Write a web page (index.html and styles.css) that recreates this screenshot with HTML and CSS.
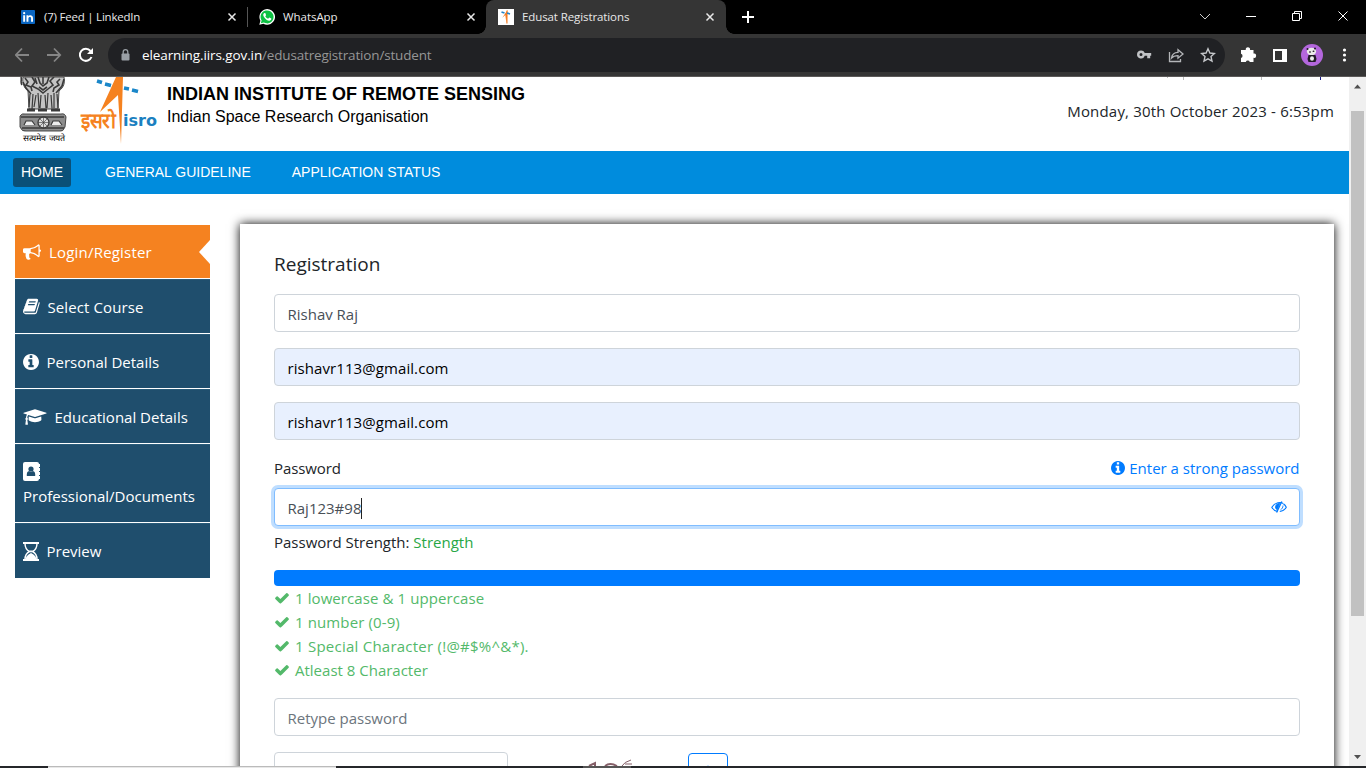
FILE: index.html
```html
<!DOCTYPE html>
<html lang="en">
<head>
<meta charset="utf-8">
<title>Edusat Registrations</title>
<link rel="stylesheet" href="styles.css">
</head>
<body>
<svg class="defs" width="0" height="0">
  <symbol id="x" viewBox="0 0 10 10"><path d="M1.500 1.500l7 7M8.500 1.500l-7 7" fill="none" stroke="currentColor" stroke-width="1.500"/></symbol>
  <symbol id="check" viewBox="0 0 1792 1792"><path fill="currentColor" d="M1671 566q0 40-28 68l-724 724-136 136q-28 28-68 28t-68-28l-136-136-362-362q-28-28-28-68t28-68l136-136q28-28 68-28t68 28l294 295 656-657q28-28 68-28t68 28l136 136q28 28 28 68z"/></symbol>
  <symbol id="info" viewBox="128 128 1536 1536"><path fill="currentColor" d="M1152 1376v-160q0-14-9-23t-23-9h-96v-512q0-14-9-23t-23-9h-320q-14 0-23 9t-9 23v160q0 14 9 23t23 9h96v320h-96q-14 0-23 9t-9 23v160q0 14 9 23t23 9h448q14 0 23-9t9-23zm-128-896v-192q0-14-9-23t-23-9h-192q-14 0-23 9t-9 23v192q0 14 9 23t23 9h192q14 0 23-9t9-23zm640 416q0 209-103 385.500t-279.500 279.500-385.500 103-385.500-103-279.500-279.500-103-385.500 103-385.500 279.500-279.500 385.500-103 385.500 103 279.500 279.500 103 385.500z"/></symbol>
</svg>
<div class="window">
  <div class="tabs">
    <div class="tab t1">
      <svg class="fav" viewBox="0 0 14 14" width="14" height="14"><rect width="14" height="14" rx="1" fill="#0a66c2"/><path d="M2.2 5.3h1.9v6.4H2.2zM5.5 5.3h1.8v.9c.9-1.5 4.7-1.6 4.7 1.7v3.8h-1.9V8.4c0-2.100-2.700-1.900-2.700 0v3.300H5.500z" fill="#fff"/><circle cx="3.150" cy="3.200" r="1.100" fill="#fff"/></svg>
      <span class="name n1">(7) Feed | LinkedIn</span><svg class="x" width="10" height="10"><use href="#x"/></svg>
    </div>
    <div class="tab t2">
      <svg class="fav" viewBox="0 0 16 16" width="16" height="16"><path d="M.3 15.800l1.100-4.100A7.800 7.800 0 1 1 4.400 14.700z" fill="#fff"/><path d="M1.800 14.300l.8-2.900A6.500 6.500 0 1 1 4.800 13.500z" fill="#0dc143"/><path d="M5.400 3.900c-1.500.8-1.500 2.400-.4 4.100 1.500 2.300 3.400 3.700 5.300 3.700 1.100 0 2.100-.8 2-2.100l-2-1.100-1.200 1.200C7.800 9.300 6.800 8.300 6.300 7.200l.8-1-.8-2.200z" fill="#fff"/></svg>
      <span class="name n2">WhatsApp</span><svg class="x" width="10" height="10"><use href="#x"/></svg>
    </div>
    <div class="tab t3">
      <svg class="fav" viewBox="0 0 16 16" width="16" height="16"><path d="M0 0h16v16H0z" fill="#fff"/><path d="M9.500 1L8.500 15 7.300 6 4.300 8.800z" fill="#f47b20"/><path d="M9 1.500v13" stroke="#f47b20"/><path d="M3.500 3l3 1M9 4l3 1" stroke="#2484c6" stroke-width="1.700"/></svg>
      <span class="name n3">Edusat Registrations</span><svg class="x" width="10" height="10"><use href="#x"/></svg>
    </div>
    <svg class="plus" width="12" height="12" viewBox="0 0 12 12"><path d="M6 0v12M0 6h12" stroke="#fff" stroke-width="2"/></svg>
    <svg class="winctl" width="160" height="30" viewBox="0 0 160 30" fill="none" stroke="#fff"><path d="M10 12l5 5 5-5" stroke="#ccc"/><path d="M56 14.500h10"/><path d="M102.500 11.500h7v7h-7zM104.500 11.500v-2h7v7h-2"/><path d="M148.500 9.500l9 9M157.500 9.500l-9 9"/></svg>
  </div>
  <div class="toolbar">
    <svg class="navbtns" width="80" height="20" viewBox="0 0 80 20" fill="none" stroke="#858585" stroke-width="1.800"><path d="M14 10H1M7 3.500L.8 10 7 16.500M32 10h13M39 3.500l6.200 6.500-6.200 6.500"/><path d="M75.500 6A6 6 0 1 0 76.500 12" stroke="#fff" stroke-width="2"/><path d="M78 3v6h-6z" fill="#fff" stroke="none"/></svg>
    <div class="address">
      <svg class="lock" width="9" height="12" viewBox="0 0 9 12"><rect x=".500" y="4.500" width="8" height="7" rx="1" fill="#9aa0a6"/><path d="M2.200 5V3a2.300 2.300 0 0 1 4.600 0v2" fill="none" stroke="#9aa0a6" stroke-width="1.300"/></svg>
      <span class="url"><b>elearning.iirs.gov.in</b>/edusatregistration/student</span>
      <svg class="acts" width="80" height="18" viewBox="0 0 80 18"><path d="M5 4.500a4 4 0 1 0 3.800 5.300h2.400v2.500h3V9.800h1V6.900H8.800A4 4 0 0 0 5 4.500zm0 2.600a1.500 1.500 0 1 1 0 3 1.500 1.500 0 0 1 0-3z" fill="#c0c2c5"/><path d="M33.500 6v9.500h11v-2.500M35.500 12c.5-3.500 3-5.500 6.500-5.600V3.700L47 8l-5 4.200V9.600c-3 0-5 .7-6.500 2.400z" fill="none" stroke="#b4b6b9" stroke-width="1.300"/><path d="M72 2.800l1.900 4.200 4.500.5-3.400 3.100 1 4.500-4-2.300-4 2.300 1-4.500-3.400-3.100 4.500-.5z" fill="none" stroke="#c5c7ca" stroke-width="1.400"/></svg>
    </div>
    <svg class="exts" width="126" height="24" viewBox="0 0 126 24"><path d="M2.500 7h3.300a2.200 2.200 0 1 1 4.200 0h3.500v3.500a2.200 2.200 0 1 1 0 4.300V19H9.800a2.100 2.100 0 0 0-4 0H1v-4a2.200 2.200 0 0 0 0-4.200V7z" fill="#fff"/><path d="M34 7h12v11H34z" fill="none" stroke="#fff" stroke-width="2"/><path d="M42 6h5v13h-5z" fill="#fff"/><circle cx="72" cy="12" r="11" fill="#b467dd"/><ellipse cx="71.500" cy="8.500" rx="4.600" ry="3.800" fill="#ecebea"/><g fill="#221c27"><circle cx="67.500" cy="6" r="1"/><circle cx="75" cy="5.500" r="1"/><ellipse cx="70" cy="9" rx="1" ry=".700"/><ellipse cx="73.500" cy="8.300" rx="1" ry=".700"/><path d="M68.500 12h7l1 4-1 3h-7l-1-3z"/></g><ellipse cx="72" cy="15.500" rx="2" ry="2.300" fill="#eee"/><g fill="#fff"><circle cx="104.500" cy="7" r="1.600"/><circle cx="104.500" cy="12" r="1.600"/><circle cx="104.500" cy="17" r="1.600"/></g></svg>
  </div>
  <div class="viewport">
    <main class="page">
      <header class="header">
        <svg class="emblem" width="50" height="68" viewBox="0 0 50 68">
          <g stroke="#3a3a3a" stroke-width=".900">
            <path d="M5 0c-1 6 1 11 5 14l1 18h29l1-18c5-4 6-8 5-14z" fill="#c4c4c4"/>
            <path d="M3 0c1 3-1 5 1 8M7 1l3 4-2 3 5 2 1 4M5 5l3 6 5 6M14 0l3 5-3 4 6 3 5 4 5-4 5-4-3-4 4-4M17 1l2 6M20 0l2 6 3 3 4-3 2-6M25 0v7M21 10l4 3 4-3M42 2l-3 3 2 3-5 3-1 4M46 2l-2 7-6 7" fill="none" stroke-width="1.600"/>
            <path d="M12 17l-1 13M15 17l-1 15M18 18l-2 12M20 16l1 15M23 18l-1 13M27 18l1 13M30 16l-1 15M33 18l1 13M36 16v15M39 17l1 14" fill="none" stroke-width="1.200"/>
            <path d="M9 33h8M20 33h9M33 33h9" stroke-width="3"/>
            <path d="M2 39q2-3 5-2h36q4-1 5 3l-1 10q-2 5-5 4H8q-4 1-6-4z" fill="#8d8d8d"/>
            <path d="M3 40h43M4 51h42" stroke-width="1.600"/>
            <circle cx="25.500" cy="45.500" r="5.500" fill="#ddd" stroke-width="1.300"/><path d="M20 45.500h11M25.500 40v11M21.500 41.500l8 8M29.500 41.500l-8 8" stroke-width=".600"/>
            <path d="M6 48l2-4h6l3 4M33 48l2-4h6l3 4" fill="#eee" stroke-width="1.200"/>
          </g>
          <text x="4.500" y="64" font-size="8.500" textLength="43" lengthAdjust="spacingAndGlyphs">सत्यमेव जयते</text>
        </svg>
        <svg class="isro" width="80" height="68" viewBox="0 0 80 68">
          <path d="M36 0h7l-2 67-3-49-18 17z" fill="#f58220"/>
          <path d="M17 4l5 1.500M25 7l6 1.500M44 11l5 1M52 13l6 1.500" stroke="#1b87c9" stroke-width="3.600"/>
          <text x="1" y="51" font-size="21" font-weight="700" fill="#f58220" textLength="34" lengthAdjust="spacingAndGlyphs">इसरो</text>
          <text x="43" y="49" class="isrotext" fill="#1b80c0" textLength="34" lengthAdjust="spacingAndGlyphs">isro</text>
        </svg>
        <div class="org"><div class="orgname">INDIAN INSTITUTE OF REMOTE SENSING</div><div class="orgsub">Indian Space Research Organisation</div></div>
        <div class="right"><svg class="sliver" width="167" height="3"><path d="M0 0h1v1H0zM16 0h1v3h-1zM94 0h1v3h-1z" fill="#bbb"/><path d="M153 0h1v3h-1z" fill="#1a1a8a"/></svg><span class="date">Monday, 30th October 2023 - 6:53pm</span></div>
      </header>
      <nav class="nav"><a class="on">HOME</a><a class="g">GENERAL GUIDELINE</a><a class="a">APPLICATION STATUS</a></nav>
      <div class="content">
        <aside class="side">
          <div class="item active"><svg width="18" height="18" viewBox="0 0 1792 1792"><path fill="#fff" d="M1664 640q53 0 90.500 37.500t37.500 90.500-37.500 90.500-90.500 37.500v384q0 52-38 90t-90 38q-417-347-812-380-58 19-91 66t-31 100.500 40 92.500q-20 33-23 65.500t6 58 33.500 55 48 50 61.500 50.500q-29 58-111.500 83t-168.500 11.500-132-55.500q-7-23-29.500-87.500t-32-94.500-23-89-15-101 3.500-98.500 22-110.500h-122q-66 0-113-47t-47-113v-192q0-66 47-113t113-47h480q435 0 896-384 52 0 90 38t38 90v384zm-128 604v-954q-394 302-768 343v270q377 42 768 341z"/></svg><span class="s1">Login/Register</span></div>
          <div class="item"><svg width="17" height="17" viewBox="60 90 1700 1620"><path fill="#fff" d="M1703 478q40 57 18 129l-275 906q-19 64-76.500 107.500t-122.500 43.500h-923q-77 0-148.500-53.500t-99.500-131.500q-24-67-2-127 0-4 3-27t4-37q1-8-3-21.500t-3-19.500q2-11 8-21t16.500-23.500 16.500-23.500q23-38 45-91.500t30-91.500q3-10 .5-30t-.5-28q3-11 17-28t17-23q21-36 42-92t25-90q1-9-2.500-32t.5-28q4-13 22-30.500t22-22.500q19-26 42.500-84.500t27.500-96.500q1-8-3-25.500t-2-26.500q2-8 9-18t18-23 17-21q8-12 16.500-30.500t15-35 16-36 19.500-32 26.500-23.500 36-11.500 47.500 5.500l-1 3q38-9 51-9h761q74 0 114 56t18 130l-274 906q-36 119-71.500 153.500t-128.500 34.500h-869q-27 0-38 15-11 16-1 43 24 70 144 70h923q29 0 56-15.500t35-41.500l300-987q7-22 5-57 38 15 59 43zm-1064 2q-4 13 2 22.500t20 9.500h608q13 0 25.500-9.500t16.500-22.500l21-64q4-13-2-22.500t-20-9.500h-608q-13 0-25.500 9.500t-16.500 22.500zm-83 256q-4 13 2 22.500t20 9.500h608q13 0 25.500-9.500t16.500-22.500l21-64q4-13-2-22.500t-20-9.500h-608q-13 0-25.500 9.500t-16.500 22.500z"/></svg><span class="s2">Select Course</span></div>
          <div class="item"><svg width="16" height="16"><use href="#info"/></svg><span class="s3">Personal Details</span></div>
          <div class="item"><svg width="24" height="18" viewBox="0 0 2304 1792"><path fill="#fff" d="M1774 836l18 316q4 69-82 128t-235 93.500-323 34.500-323-34.500-235-93.500-82-128l18-316 574 181q22 7 48 7t48-7zm530-324q0 23-22 31l-1120 352q-4 1-10 1t-10-1l-652-206q-43 34-71 111.500t-34 178.500q63 36 63 109 0 69-58 107l58 433q2 14-8 25-9 11-24 11h-192q-15 0-24-11-10-11-8-25l58-433q-58-38-58-107 0-73 65-111 11-207 98-330l-333-104q-22-8-22-31t22-31l1120-352q4-1 10-1t10 1l1120 352q22 8 22 31z"/></svg><span class="s4">Educational Details</span></div>
          <div class="item two"><svg width="18" height="19" viewBox="0 0 18 19"><rect width="16" height="19" rx="2" fill="#fff"/><path d="M15 2h2v3h-2zM15 6h2v3h-2zM15 10h2v3h-2zM15 14h2v3h-2z" fill="#fff"/><circle cx="8" cy="7" r="2.600" fill="#1f4e6d"/><path d="M3.800 14v-2q0-2.500 2.200-3 2 1.500 4 0 2.200.5 2.200 3v2z" fill="#1f4e6d"/></svg><span class="s5">Professional/Documents</span></div>
          <div class="item last"><svg width="16" height="19" viewBox="0 0 16 19"><path d="M0 0h16v2H0zM0 17h16v2H0z" fill="#fff"/><path d="M2 1.500c0 4.500 1.500 6.500 4.500 8-3 1.500-4.500 3.500-4.500 8M14 1.500c0 4.500-1.500 6.500-4.500 8 3 1.500 4.500 3.500 4.500 8" fill="none" stroke="#fff" stroke-width="1.400"/><path d="M2.500 17q.5-3 3-4.500l2.500-1.500 2.500 1.500q2.500 1.500 3 4.500zM6.500 8.500h3L8 11z" fill="#fff"/></svg><span class="s6">Preview</span></div>
        </aside>
        <section class="card">
          <h3>Registration</h3>
          <div class="input"><span class="i1">Rishav Raj</span></div>
          <div class="input auto"><span class="i2">rishavr113@gmail.com</span></div>
          <div class="input auto"><span class="i2">rishavr113@gmail.com</span></div>
          <div class="label"><span class="l1">Password</span><span class="hint"><svg width="14" height="14"><use href="#info"/></svg><span class="l2">Enter a strong password</span></span></div>
          <div class="input focus"><span class="i3">Raj123#98</span><i class="caret"></i>
            <svg class="eye" width="16" height="14" viewBox="0 0 16 14" fill="none" stroke="#007bff"><path d="M6.500 11.400C4 11 2 9.500.8 7.200 3.800 2.200 10 1.800 12 3.500M12.400 3.700c1.200.8 2.200 2 2.900 3.500-1.300 2.300-3.700 4-6.500 4.300" stroke-width="1.100"/><path d="M4.500 7.200C4.500 5 6 3.500 8.800 3.300L6.300 9.800C5.300 9.300 4.500 8.500 4.500 7.200z" fill="#007bff" stroke-width=".800"/><path d="M10.800 1.500L5.600 12.500" stroke-width="1.300"/><path d="M12 5.500c0 2-1 3.500-2.500 4.300" stroke-width=".900"/></svg></div>
          <div class="strength"><span class="l3">Password Strength: <em>Strength</em></span></div>
          <div class="bar"></div>
          <ul class="rules">
            <li><svg width="16" height="16"><use href="#check"/></svg><span class="r1">1 lowercase &amp; 1 uppercase</span></li>
            <li><svg width="16" height="16"><use href="#check"/></svg><span class="r2">1 number (0-9)</span></li>
            <li><svg width="16" height="16"><use href="#check"/></svg><span class="r3">1 Special Character (!@#$%^&amp;*).</span></li>
            <li><svg width="16" height="16"><use href="#check"/></svg><span class="r4">Atleast 8 Character</span></li>
          </ul>
          <div class="input ph"><span class="i4">Retype password</span></div>
          <div class="captcha"><div class="input short"></div><svg class="code" width="60" height="14" viewBox="0 0 60 14" fill="none" stroke="#855f68" stroke-width="2"><path d="M5 14l6-3v3M21 14q5-4 12 0"/><path d="M38 14q2-4 9-6M41 12h7" stroke-width="1"/></svg><div class="refresh"><svg width="10" height="4" viewBox="0 0 10 4"><path d="M2 3q3-3 6 0" fill="none" stroke="#007bff" stroke-width="1.500"/></svg></div></div>
        </section>
      </div>
    </main>
    <div class="scroll"><svg width="17" height="34" viewBox="0 0 17 34"><path d="M5 11.500L8.500 7.500l3.500 4z" fill="#505050"/></svg><div class="thumb"></div><svg class="down" width="17" height="17" viewBox="0 0 17 17"><path d="M5 6h7l-3.500 4z" fill="#505050"/></svg></div>
  </div>
  <div class="taskbar"><i class="dark"></i><i class="search"></i><i class="app"></i><i class="run"></i></div>
</div>
</body>
</html>
```
FILE: styles.css
```css
* { box-sizing: border-box; }
body { margin: 0; background: #fff; font-family: "Open Sans", sans-serif; overflow: hidden; }
svg { display: block; flex: none; }
.defs { position: absolute; }
.window { width: 1366px; height: 768px; display: flex; flex-direction: column; overflow: hidden; }

.tabs { height: 34px; background: #000; display: flex; align-items: center; flex: none; }
.tab { height: 34px; display: flex; align-items: center; color: #e8e8e8; font-size: 11.5px; white-space: nowrap; }
.tab .x { margin-left: auto; color: #e8e8e8; }
.t1 { width: 248px; padding: 0 11px 0 21px; background: linear-gradient(#555, #555) right 0 top 7px / 1px 20px no-repeat; }
.t2 { width: 238px; padding: 0 10px 0 11px; }
.t3 { width: 240px; padding: 0 11px 0 12px; background: #353535; border-radius: 8px 8px 0 0; position: relative; }
.t3::before, .t3::after { content: ""; position: absolute; bottom: 0; width: 8px; height: 8px; }
.t3::before { left: -8px; background: radial-gradient(circle at 0 0, #000 7.500px, #353535 8px); }
.t3::after { right: -8px; background: radial-gradient(circle at 100% 0, #000 7.500px, #353535 8px); }
.name { margin-left: 8px; margin-top: -1px; letter-spacing: -.1px; }
.n1 { margin-left: 9px; letter-spacing: -.22px; }
.n2 { letter-spacing: -.05px; }
.plus { margin-left: 16px; }
.winctl { margin-left: auto; margin-right: 16px; }

.toolbar { height: 43px; background: #353535; border-bottom: 1px solid #5b5958; display: flex; align-items: center; flex: none; }
.navbtns { margin-left: 15px; }
.address { width: 1117px; height: 34px; margin-left: 13px; border-radius: 17px; background: #202124; display: flex; align-items: center; padding-left: 13px; }
.url { margin-left: 12px; font-size: 13.500px; color: #969696; letter-spacing: -.17px; }
.url b { color: #fff; font-weight: 400; letter-spacing: -.1px; }
.acts { margin-left: auto; margin-right: 9px; }
.exts { margin-left: 15px; }

.viewport { height: 689px; display: flex; flex: none; overflow: hidden; }
.page { width: 1349px; overflow: hidden; }
.header { height: 74px; display: flex; }
.emblem { margin-left: 18px; }
.isro { margin-left: 12px; }
.isrotext { font: 700 16px "DejaVu Sans", sans-serif; }
.org { margin: 6px 0 0 7px; font-family: "Liberation Sans", sans-serif; color: #000; white-space: nowrap; }
.orgname { font-size: 18px; font-weight: 700; line-height: 22px; letter-spacing: 0; }
.orgsub { font-size: 16px; line-height: 24px; }
.right { margin-left: auto; margin-right: 15px; display: flex; flex-direction: column; align-items: flex-end; }
.date { margin-top: 19px; font-size: 15px; line-height: 24px; color: #212529; letter-spacing: .18px; margin-right: 0; }

.nav { height: 43px; background: #008cdd; display: flex; align-items: center; padding-left: 13px; font: 14px "Liberation Sans", sans-serif; color: #fff; }
.nav .on { width: 58px; height: 29px; line-height: 29px; text-align: center; background: #0a5078; border-radius: 3px; }
.g, .a { margin-top: -1px; }
.g { margin-left: 34px; }
.a { margin-left: 41px; }

.content { display: flex; align-items: flex-start; padding: 30px 15px 0; }
.side { width: 195px; margin-top: 1px; color: #fff; font-size: 15px; }
.item { height: 54px; margin-bottom: 1px; background: #1f4e6d; border-top: 1px solid #285a78; display: flex; align-items: center; padding-left: 8px; gap: 8px; white-space: nowrap; }
.s2, .s3, .s4, .s6 { margin-left: -.5px; }
.s1 { letter-spacing: .2px; }
.s2 { letter-spacing: .1px; }
.active { height: 53px; background: #f58220; border-top: 0; position: relative; }
.active::after { content: ""; position: absolute; right: 0; top: 15px; border: solid transparent; border-width: 12px 11px 12px 0; border-right-color: #fff; }
.two { height: 78px; flex-direction: column; align-items: flex-start; gap: 5px; padding-top: 17px; }
.last { height: 55px; }

.card { width: 1094px; height: 600px; margin-left: 30px; padding: 24px 34px 0; box-shadow: 0 0 10px #000; color: #212529; font-size: 15px; }
h3 { margin: 0 0 16px; font-size: 19px; line-height: 32px; height: 30px; font-weight: 400; }
.input { height: 38px; margin-bottom: 16px; border: 1px solid #ced4da; border-radius: 4px; background: #fff; padding: 2px 12px 0 12.500px; display: flex; align-items: center; color: #495057; }
.auto { background: #e8f0fe; color: #000; }
.i2 { letter-spacing: .08px; }
.label { height: 24px; margin-bottom: 8px; display: flex; justify-content: space-between; align-items: center; }
.l1 { letter-spacing: -.1px; }
.hint { color: #007bff; display: flex; align-items: center; gap: 4px; margin-right: .5px; }
.focus { border-color: #80bdff; box-shadow: 0 0 0 3px #bfdeff; margin-bottom: 4px; }
.caret { width: 1px; height: 21px; background: #222; }
.eye { margin: -2px 0 0 auto; }
.strength { height: 24px; line-height: 25px; margin-bottom: 16px; }
.strength em { font-style: normal; color: #28a745; }
.bar { height: 16px; border-radius: 4px; background: #007bff; }
.rules { list-style: none; margin: 0 0 16px; padding: 0; color: #53b96a; }
.rules li { height: 24px; display: flex; align-items: center; gap: 5px; }
.r1 { letter-spacing: .09px; }
.r2 { letter-spacing: .12px; }
.r3 { letter-spacing: .24px; }
.ph { color: #6c757d; }
.captcha { display: flex; }
.short { width: 234px; }
.code { margin-left: 76px; }
.refresh { width: 40px; height: 38px; margin: 1px 0 0 44px; border: 1px solid #007bff; border-radius: 4px; padding: 11px 0 0 14px; }

.scroll { width: 17px; background: #f0f0f0; display: flex; flex-direction: column; }
.thumb { width: 13px; height: 505px; margin-left: 2px; background: #c1c1c1; }
.down { margin-top: auto; }
.taskbar { height: 2px; background: #25272a; display: flex; flex: none; }
.dark { width: 48px; }
.search { width: 288px; background: #e8e8e8; border-top: 1px solid #bbb; }
.app { width: 247px; }
.run { width: 48px; background: #555; }
```
